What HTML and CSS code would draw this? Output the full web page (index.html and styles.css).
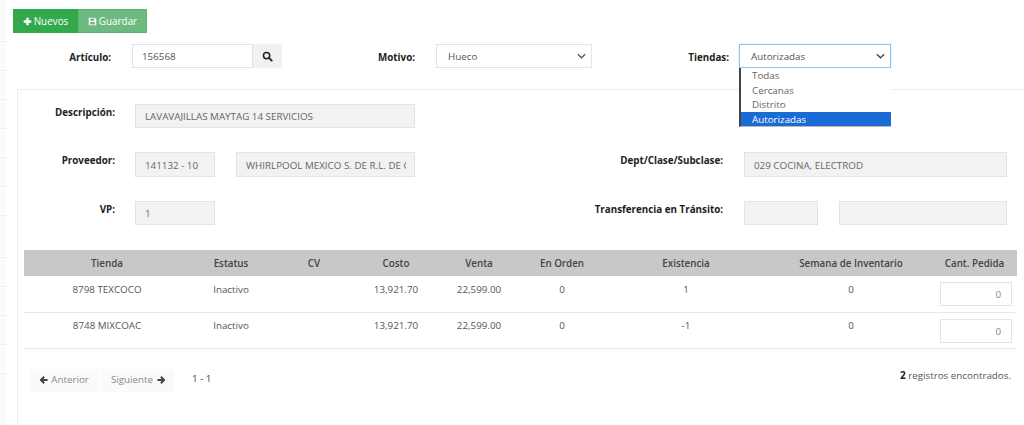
FILE: index.html
```html
<!DOCTYPE html>
<html lang="es">
<head>
<meta charset="utf-8">
<title>Artículo</title>
<link rel="stylesheet" href="styles.css">
</head>
<body>
<div class="shell">
  <aside class="rail"><i></i><i></i><i></i><i></i><i></i><i></i><i></i><i></i><i></i><i></i><i></i><i></i></aside>
  <main class="page">
    <div class="toolbar">
      <button class="btn btn-new"><svg class="ico" viewBox="0 0 10 10"><path d="M3.7 0.8h2.6v2.9h2.9v2.6H6.3v2.9H3.7V6.3H0.8V3.7h2.9z"/></svg>Nuevos</button>
      <button class="btn btn-save"><svg class="ico" viewBox="0 0 10 10"><path fill-rule="evenodd" d="M1 .8h6.5L9.2 2.5v6.7H.8V.8zM2.5 1.7v2.6h4.4V1.7zM2.4 5.6v2.7h5.2V5.6z"/></svg>Guardar</button>
    </div>
    <div class="search-row">
      <div class="group g-art">
        <label class="lbl">Artículo:</label>
        <div class="field input art-input">156568</div>
        <div class="search-btn"><svg viewBox="0 0 12 12"><circle cx="5" cy="5" r="3.4" fill="none" stroke="#222" stroke-width="1.7"/><path d="M7.6 7.6l3 3" stroke="#222" stroke-width="2" stroke-linecap="round"/></svg></div>
      </div>
      <div class="group g-mot">
        <label class="lbl">Motivo:</label>
        <div class="field input sel mot-sel">Hueco<svg class="chev" viewBox="0 0 10 6"><path d="M1 1l4 4 4-4" fill="none" stroke="#555" stroke-width="1.4"/></svg></div>
      </div>
      <div class="group g-tie">
        <label class="lbl">Tiendas:</label>
        <div class="dd">
          <div class="field input sel tie-sel">Autorizadas<svg class="chev" viewBox="0 0 10 6"><path d="M1 1l4 4 4-4" fill="none" stroke="#444" stroke-width="1.4"/></svg></div>
          <ul class="menu">
            <li>Todas</li><li>Cercanas</li><li>Distrito</li><li class="on">Autorizadas</li>
          </ul>
        </div>
      </div>
    </div>
    <section class="panel">
      <div class="info info-1">
        <label class="lbl l-left">Descripción:</label>
        <div class="field ro w-desc">LAVAVAJILLAS MAYTAG 14 SERVICIOS</div>
      </div>
      <div class="info info-2">
        <label class="lbl l-left">Proveedor:</label>
        <div class="field ro w-sm">141132 - 10</div>
        <div class="field ro w-name"><span class="clip">WHIRLPOOL MEXICO S. DE R.L. DE C.V.</span></div>
        <label class="lbl l-right">Dept/Clase/Subclase:</label>
        <div class="field ro w-dept">029 COCINA, ELECTROD</div>
      </div>
      <div class="info info-3">
        <label class="lbl l-left">VP:</label>
        <div class="field ro w-sm">1</div>
        <div class="spacer"></div>
        <label class="lbl l-right">Transferencia en Tránsito:</label>
        <div class="field ro w-t1"></div>
        <div class="field ro w-t2"></div>
      </div>
      <table class="grid">
        <thead>
          <tr><th class="c1">Tienda</th><th class="c2">Estatus</th><th class="c3">CV</th><th class="c4">Costo</th><th class="c5">Venta</th><th class="c6">En Orden</th><th class="c7">Existencia</th><th class="c8">Semana de Inventario</th><th class="c9">Cant. Pedida</th></tr>
        </thead>
        <tbody>
          <tr class="first"><td>8798 TEXCOCO</td><td>Inactivo</td><td></td><td>13,921.70</td><td>22,599.00</td><td>0</td><td>1</td><td>0</td><td class="qty"><div class="field input q">0</div></td></tr>
          <tr><td>8748 MIXCOAC</td><td>Inactivo</td><td></td><td>13,921.70</td><td>22,599.00</td><td>0</td><td>-1</td><td>0</td><td class="qty"><div class="field input q">0</div></td></tr>
        </tbody>
      </table>
      <div class="foot">
        <div class="pager">
          <span class="pg pg-prev"><svg class="arr" viewBox="0 0 10 10"><path d="M5.2 1L1.2 5l4 4M2 5H9.5" fill="none" stroke="#444" stroke-width="2.4"/></svg>Anterior</span>
          <span class="pg pg-next">Siguiente<svg class="arr r" viewBox="0 0 10 10"><path d="M4.8 1l4 4-4 4M8 5H.5" fill="none" stroke="#444" stroke-width="2.4"/></svg></span>
          <span class="pages">1 - 1</span>
        </div>
        <div class="count"><b>2</b> registros encontrados.</div>
      </div>
    </section>
  </main>
</div>
</body>
</html>
```

FILE: styles.css
```css
* { box-sizing: border-box; }
html, body { margin: 0; height: 425px; overflow: hidden; background: #fff; }
body { font: 9.8px/14px "Open Sans", sans-serif; color: #555; }
.shell { display: flex; height: 425px; overflow: hidden; }
.rail { width: 6px; flex: none; padding-top: 41px; display: flex; flex-direction: column; background: #fbfbfb; overflow: hidden; }
.rail i { display: block; height: 29px; flex: none; border-top: 1px solid #eee; }
.rail i:nth-child(7) { height: 42px; }
.rail i:last-child { height: 24px; }
.page { flex: 1; padding-top: 9px; padding-left: 7px; min-width: 0; }
.toolbar { display: flex; height: 24px; }
.btn { border: 0; padding: 0; height: 24px; color: #fff; font: 9.9px "Open Sans", sans-serif; display: flex; align-items: center; justify-content: center; }
.btn-new { width: 65px; background: #33a94e; }
.btn-save { width: 69px; background: #6cba80; border: 1px solid #5db273; }
.ico { width: 9px; height: 9px; fill: #fff; margin-right: 2px; }
.search-row { display: flex; height: 56px; padding-top: 11px; position: relative; }
.group { display: flex; align-items: flex-start; flex: none; }
.lbl { font-weight: 700; color: #222; text-align: right; white-space: nowrap; }
.field { height: 24px; display: flex; align-items: center; padding-left: 9px; padding-top: 2px; }
.input { background: #fff; border: 1px solid #e4e4e4; }
.sel { justify-content: space-between; padding-left: 11px; padding-right: 5px; }
.chev { width: 9px; height: 6px; margin-top: -2px; }
.g-art { width: 269px; }
.g-art .lbl { width: 98px; padding-top: 7px; margin-right: 21px; }
.art-input { width: 121px; }
.search-btn { width: 29px; height: 24px; background: #f1f1f1; display: flex; align-items: center; justify-content: center; }
.search-btn svg { width: 11px; height: 11px; }
.g-mot { width: 310px; padding-left: 96px; }
.g-mot .lbl { padding-top: 7px; width: 37px; margin-right: 21px; }
.mot-sel { width: 156px; }
.g-tie { padding-left: 96px; }
.g-tie .lbl { padding-top: 7px; width: 41px; margin-right: 10px; }
.dd { position: relative; width: 152px; }
.tie-sel { width: 152px; border-color: #8fc4ef; box-shadow: 0 0 2px #bcdcf5; color: #555; }
.menu { position: absolute; top: 24px; left: 0; width: 152px; margin: 0; padding: 0; list-style: none; background: #fff; border-left: 2px solid #444; border-bottom: 1px solid #bbb; z-index: 2; }
.menu li { height: 14.5px; line-height: 15.5px; padding-left: 11px; color: #666; overflow: hidden; }
.menu li.on { background: #1a6bd6; color: #fff; }
.panel { margin-left: 4px; height: 336px; border-top: 1px solid #ececec; border-left: 1px solid #ececec; padding: 14px 7px 0 6px; }
.info { display: flex; align-items: flex-start; }
.info-1 { height: 48px; }
.info-2 { height: 49px; }
.info-3 { height: 48px; }
.info-2 .field { height: 25px; padding-top: 3px; }
.ro { background: #f2f2f2; border: 1px solid #e3e3e3; color: #666; overflow: hidden; white-space: nowrap; flex: none; }
.clip { display: block; overflow: hidden; flex: 1; min-width: 0; margin-right: 8px; }
.l-left { width: 91px; margin-right: 20px; margin-top: 2px; flex: none; }
.l-right { margin-top: 2px; flex: none; }
.w-desc { width: 280px; }
.w-sm { width: 80px; }
.w-name { width: 179px; margin-left: 21px; }
.info-2 .l-right { width: 308px; }
.w-dept { width: 263px; margin-left: 21px; }
.spacer { width: 200px; flex: none; }
.info-3 .l-right { width: 308px; }
.w-t1 { width: 74px; margin-left: 21px; }
.w-t2 { width: 168px; margin-left: 21px; }
.grid { width: 993px; border-collapse: collapse; table-layout: fixed; margin-top: 1px; }
.grid th { background: #c8c8c8; height: 26px; font-weight: 600; color: #444; text-align: center; padding: 1px 0 0; }
.grid td { height: 36px; border-bottom: 1px solid #e8e8e8; text-align: center; vertical-align: top; padding: 6px 0 0; color: #555; }
.grid .first td { padding-top: 7px; }
.c1 { width: 166px; } .c2 { width: 82px; } .c3 { width: 84px; } .c4 { width: 80px; } .c5 { width: 86px; } .c6 { width: 80px; } .c7 { width: 168px; } .c8 { width: 162px; } .c9 { width: 85px; }
.grid td.qty, .grid .first td.qty { padding: 6px 5px 0 0; }
.q { width: 72px; justify-content: flex-end; padding-right: 10px; margin-left: auto; color: #888; }
.foot { display: flex; justify-content: space-between; padding: 20px 6px 0 6px; }
.pager { display: flex; align-items: flex-start; }
.pg { height: 23px; display: flex; align-items: center; justify-content: center; background: #fafafa; color: #888; margin-right: 2px; }
.pg-prev { width: 69px; }
.pg-next { width: 74px; }
.arr { width: 8px; height: 8px; margin-right: 3px; }
.arr.r { margin: 0 0 0 4px; }
.pages { margin-left: 15px; margin-top: 3px; color: #444; }
.count { color: #555; margin-top: -1px; }
.count b { color: #222; font-size: 10px; }
```
